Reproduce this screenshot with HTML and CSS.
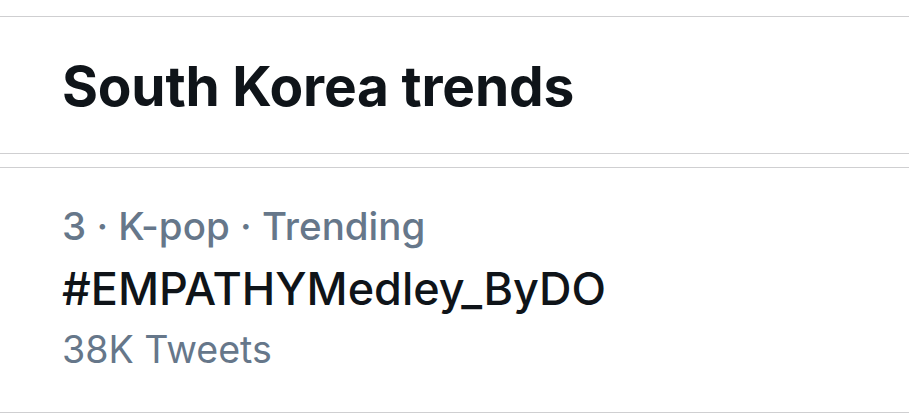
FILE: index.html
```html
<!DOCTYPE html>
<html lang="en">
  <head>
    <meta charset="UTF-8" />
    <meta name="viewport" content="width=device-width, initial-scale=1.0" />
    <title>South Korea trends</title>
    <link rel="stylesheet" href="styles.css">
  </head>
  <body>
    <!-- Section header -->
    <header class="section-header">
      <h2 class="section-title">South Korea trends</h2>
    </header>

    <div class="section-gap"></div>

    <!-- Trend list -->
    <ul class="trend-list">
      <li class="trend">
        <div class="trend-meta">3 · K-pop · Trending</div>
        <div class="trend-name">#EMPATHYMedley_ByDO</div>
        <div class="trend-count">38K Tweets</div>
      </li>
    </ul>
  </body>
</html>
```

FILE: styles.css
```css
/* Reset & Base Styles */
* {
  margin: 0;
  padding: 0;
  box-sizing: border-box;
}

body {
  font-family: "Inter", "Liberation Sans", sans-serif;
  background-color: #fff;
  color: #0f1419;
  padding-top: 16px;
}

/* Header */
.section-header {
  border-top: 1px solid #cfcfd1;
  border-bottom: 1px solid #cfcfd1;
  height: 138px;
  display: flex;
  align-items: center;
  padding-left: 62px;
}

.section-title {
  font-size: 55px;
  font-weight: 700;
  letter-spacing: -0.2px;
  line-height: 1;
  padding-top: 3px;
}

.section-gap {
  height: 13px;
}

/* Trend list */
.trend-list {
  list-style: none;
  border-top: 1px solid #cfcfd1;
  border-bottom: 1px solid #cfcfd1;
}

.trend {
  height: 244px;
  padding: 33px 0 0 62px;
}

.trend-meta {
  color: #66778a;
  font-size: 38.5px;
  font-weight: 500;
  line-height: 50px;
}

.trend-name {
  font-size: 45px;
  font-weight: 500;
  line-height: 76px;
}

.trend-count {
  color: #66778a;
  font-size: 37.6px;
  line-height: 46px;
}
```
